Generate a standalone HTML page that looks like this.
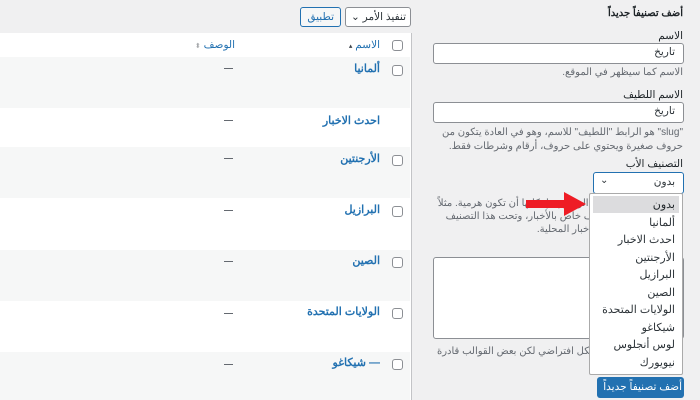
<!DOCTYPE html>
<html><head><meta charset="utf-8"><style>
body{margin:0;width:700px;height:400px;overflow:hidden;background:#f0f0f1;font-family:"Liberation Sans","Noto Sans CJK SC",sans-serif;font-size:10px;color:#3c434a;position:relative}
.a{position:absolute}
.r{text-align:right;direction:rtl}
.inp{position:absolute;background:#fff;border:1px solid #8c8f94;border-radius:3px;box-sizing:border-box}
.lnk{color:#2271b1;font-weight:bold;font-size:11px}
.cb{position:absolute;width:11px;height:11px;border:1px solid #8c8f94;border-radius:3px;background:#fff;box-sizing:border-box}
.row{position:absolute;left:0;width:410px}
.dash{position:absolute;left:224px;width:9px;height:1px;background:#646970}
.help{color:#646970;font-size:10px}
</style></head><body>
<div class="a" style="left:0;top:33px;width:411px;height:367px;background:#fff;border-right:1px solid #c3c4c7"></div>
<div class="row" style="top:33px;height:24px;background:#fff;border-bottom:1px solid #c3c4c7"></div>
<div class="row" style="top:57px;height:51px;background:#f6f7f7"></div>
<div class="row" style="top:147px;height:51px;background:#f6f7f7"></div>
<div class="row" style="top:250px;height:51px;background:#f6f7f7"></div>
<div class="row" style="top:352px;height:48px;background:#f6f7f7"></div>
<div class="cb" style="left:392px;top:40px"></div>
<div class="a r" style="right:320px;top:39px;color:#2271b1;font-size:10.5px">الاسم <span style="font-size:7px;color:#3c434a">▴</span></div>
<div class="a r" style="right:465px;top:39px;color:#2271b1;font-size:10.5px">الوصف <span style="font-size:7px;color:#a7aaad">⬍</span></div>

<div class="cb" style="left:392px;top:65px"></div><div class="a r lnk" style="right:320px;top:62px">ألمانيا</div><div class="dash" style="top:68px"></div>
<div class="a r lnk" style="right:320px;top:114px">احدث الاخبار</div><div class="dash" style="top:120px"></div>
<div class="cb" style="left:392px;top:155px"></div><div class="a r lnk" style="right:320px;top:152px">الأرجنتين</div><div class="dash" style="top:158px"></div>
<div class="cb" style="left:392px;top:206px"></div><div class="a r lnk" style="right:320px;top:203px">البرازيل</div><div class="dash" style="top:210px"></div>
<div class="cb" style="left:392px;top:257px"></div><div class="a r lnk" style="right:320px;top:254px">الصين</div><div class="dash" style="top:261px"></div>
<div class="cb" style="left:392px;top:308px"></div><div class="a r lnk" style="right:320px;top:305px">الولايات المتحدة</div><div class="dash" style="top:313px"></div>
<div class="cb" style="left:392px;top:359px"></div><div class="a r lnk" style="right:320px;top:356px">— شيكاغو</div><div class="dash" style="top:364px"></div>

<div class="inp" style="left:345px;top:7px;width:66px;height:20px"></div>
<div class="a r" style="right:294px;top:11px;font-size:10.5px;color:#2c3338">تنفيذ الأمر ⌄</div>
<div class="inp" style="left:300px;top:7px;width:41px;height:20px;border-color:#2271b1;background:#f6f7f7"></div>
<div class="a r" style="right:366px;top:11px;font-size:10.5px;color:#2271b1">تطبيق</div>

<div class="a r" style="right:17px;top:8px;font-weight:bold;font-size:10px;color:#1d2327">أضف تصنيفاً جديداً</div>
<div class="a r" style="right:17px;top:30px;font-size:10.5px;color:#1d2327">الاسم</div>
<div class="inp" style="left:433px;top:43px;width:251px;height:21px"></div>
<div class="a r" style="right:25px;top:46px;font-size:10.5px;color:#2c3338">تاريخ</div>
<div class="a r help" style="right:17px;top:67px">الاسم كما سيظهر في الموقع.</div>
<div class="a r" style="right:17px;top:89px;font-size:10.5px;color:#1d2327">الاسم اللطيف</div>
<div class="inp" style="left:433px;top:102px;width:251px;height:21px"></div>
<div class="a r" style="right:25px;top:105px;font-size:10.5px;color:#2c3338">تاريخ</div>
<div class="a r help" style="right:17px;top:126px;width:252px;line-height:14px">"slug" هو الرابط "اللطيف" للاسم، وهو في العادة يتكون من حروف صغيرة ويحتوي على حروف، أرقام وشرطات فقط.</div>
<div class="a r" style="right:17px;top:158px;font-size:10.5px;color:#1d2327">التصنيف الأب</div>
<div class="inp" style="left:593px;top:172px;width:91px;height:22px;border-color:#2271b1"></div>
<div class="a r" style="right:25px;top:176px;font-size:10.5px;color:#2c3338">بدون</div>
<div class="a" style="left:600px;top:175px;font-size:10px;color:#2c3338">⌄</div>
<div class="a r help" style="right:17px;top:197px;width:252px;line-height:13px">التصنيفات، على عكس الوسوم، بإمكانها أن تكون هرمية. مثلاً تستطيع أن تجعل تصنيف خاص بالأخبار، وتحت هذا التصنيف تضع تصنيفات فرعية للأخبار المحلية.</div>
<div class="inp" style="left:433px;top:257px;width:251px;height:82px"></div>
<div class="a r help" style="right:17px;top:345px;width:252px;line-height:13px">الوصف ليس ظاهراً بشكل افتراضي لكن بعض القوالب قادرة على</div>
<div class="a" style="left:597px;top:377px;width:87px;height:21px;background:#2271b1;border-radius:3px"></div>
<div class="a r" style="right:18px;top:381px;color:#fff;font-size:10.5px">أضف تصنيفاً جديداً</div>

<div class="a" style="left:589px;top:193px;width:94px;height:182px;background:#fff;border:1px solid #aaa;border-radius:2px;box-sizing:border-box"></div>
<div class="a" style="left:593px;top:196px;width:86px;height:17px;background:#dcdcde"></div>
<div class="a r" style="right:25px;top:197px;width:86px;font-size:11px;color:#1d2327;line-height:17.5px">بدون<br><span style="color:#2c3338">ألمانيا<br>احدث الاخبار<br>الأرجنتين<br>البرازيل<br>الصين<br>الولايات المتحدة<br>شيكاغو&nbsp;&nbsp;&nbsp;<br>لوس أنجلوس&nbsp;&nbsp;&nbsp;<br>نيويورك&nbsp;&nbsp;&nbsp;</span></div>

<svg class="a" style="left:520px;top:190px" width="72" height="30"><path d="M6 10 L44 10 L44 2 L66 14 L44 26 L44 18 L6 18 Z" fill="#ee1c25"/></svg>
</body></html>
